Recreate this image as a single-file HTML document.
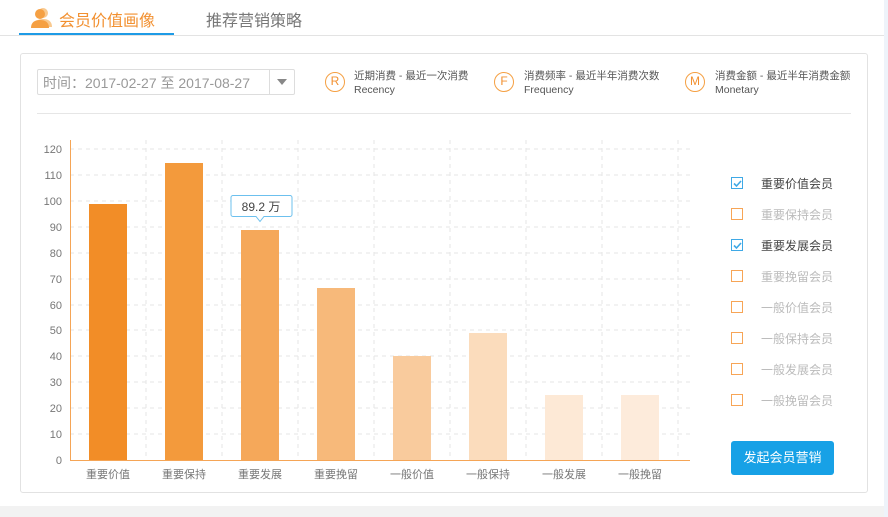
<!DOCTYPE html>
<html><head><meta charset="utf-8"><style>
*{margin:0;padding:0;box-sizing:border-box}
body{width:888px;height:517px;overflow:hidden;background:#fff;font-family:"Liberation Sans","Noto Sans CJK SC",sans-serif;position:relative}
.a{position:absolute;white-space:nowrap}
.cb{position:absolute;left:731px;width:12px;height:12px;border:1.5px solid #f7a556;background:#fff}
.cb.on{border-color:#3fa9e6}
.lt{position:absolute;left:761px;font-size:12px;color:#bbb}
.lt.on{color:#444}
.circ{position:absolute;width:20px;height:20px;border:1.5px solid #f5a043;border-radius:50%;color:#f29030;font-size:12px;text-align:center;line-height:17px}
.rt{position:absolute;font-size:10.5px;color:#555;line-height:14px}
</style></head><body>
<div class="a" style="left:884px;top:0;width:4px;height:517px;background:#eef3fa"></div>
<div class="a" style="left:0;top:506px;width:884px;height:11px;background:#f2f2f2"></div>
<svg class="a" style="left:30px;top:7px" width="24" height="22" viewBox="0 0 24 22"><circle cx="13" cy="6" r="5" fill="#f9c98f"/><path d="M4 20c0-6 4-8 9-8s9 2 9 8z" fill="#f9c98f"/><circle cx="10" cy="7" r="5" fill="#f5a043"/><path d="M1 21c0-6 4-8 9-8s9 2 9 8z" fill="#f5a043"/></svg>
<div class="a" style="left:59px;top:7px;font-size:16px;color:#f29030">会员价值画像</div>
<div class="a" style="left:206px;top:7px;font-size:16px;color:#777">推荐营销策略</div>
<div class="a" style="left:19px;top:33px;width:155px;height:2px;background:#1e9be6"></div>
<div class="a" style="left:0;top:35px;width:884px;height:1px;background:#e3e3e3"></div>
<div class="a" style="left:20px;top:53px;width:848px;height:440px;border:1px solid #e2e2e2;border-radius:3px"></div>
<div class="a" style="left:37px;top:69px;width:258px;height:26px;border:1px solid #ddd;border-radius:2px"></div>
<div class="a" style="left:269px;top:69px;width:1px;height:26px;background:#ddd"></div>
<div class="a" style="left:43px;top:73px;font-size:14px;color:#999">时间：2017-02-27 至 2017-08-27</div>
<div class="a" style="left:277px;top:79px;width:0;height:0;border-left:5px solid transparent;border-right:5px solid transparent;border-top:6px solid #888"></div>
<div class="circ" style="left:325px;top:72px">R</div>
<div class="rt" style="left:354px;top:69px">近期消费 - 最近一次消费<br>Recency</div>
<div class="circ" style="left:494px;top:72px">F</div>
<div class="rt" style="left:524px;top:69px">消费频率 - 最近半年消费次数<br>Frequency</div>
<div class="circ" style="left:685px;top:72px">M</div>
<div class="rt" style="left:715px;top:69px">消费金额 - 最近半年消费金额<br>Monetary</div>
<div class="a" style="left:37px;top:113px;width:814px;height:1px;background:#e6e6e6"></div>
<svg class="a" style="left:0;top:0" width="888" height="517">
<g stroke="#e6e6e6" stroke-dasharray="4,4" stroke-width="1">
<line x1="70" x2="690" y1="149" y2="149"/><line x1="70" x2="690" y1="175" y2="175"/><line x1="70" x2="690" y1="201" y2="201"/><line x1="70" x2="690" y1="227" y2="227"/><line x1="70" x2="690" y1="253" y2="253"/><line x1="70" x2="690" y1="279" y2="279"/><line x1="70" x2="690" y1="305" y2="305"/><line x1="70" x2="690" y1="330" y2="330"/><line x1="70" x2="690" y1="356" y2="356"/><line x1="70" x2="690" y1="382" y2="382"/><line x1="70" x2="690" y1="408" y2="408"/><line x1="70" x2="690" y1="434" y2="434"/>
<line x1="146" x2="146" y1="140" y2="460"/><line x1="222" x2="222" y1="140" y2="460"/><line x1="298" x2="298" y1="140" y2="460"/><line x1="374" x2="374" y1="140" y2="460"/><line x1="450" x2="450" y1="140" y2="460"/><line x1="526" x2="526" y1="140" y2="460"/><line x1="602" x2="602" y1="140" y2="460"/><line x1="678" x2="678" y1="140" y2="460"/>
</g>
<rect x="89" y="204" width="38" height="256" fill="#f28d27"/>
<rect x="165" y="163" width="38" height="297" fill="#f39a3c"/>
<rect x="241" y="230" width="38" height="230" fill="#f5a85a"/>
<rect x="317" y="288" width="38" height="172" fill="#f7b97a"/>
<rect x="393" y="356" width="38" height="104" fill="#f9cb9d"/>
<rect x="469" y="333" width="38" height="127" fill="#fbdcbc"/>
<rect x="545" y="395" width="38" height="65" fill="#fde9d6"/>
<rect x="621" y="395" width="38" height="65" fill="#fdebdb"/>
<line x1="70.5" x2="70.5" y1="140" y2="460" stroke="#f5a556"/>
<line x1="70" x2="690" y1="460.5" y2="460.5" stroke="#f5a556"/>
<path d="M233 195.5h57a2 2 0 0 1 2 2v17a2 2 0 0 1-2 2h-26l-4 5-4-5h-23a2 2 0 0 1-2-2v-17a2 2 0 0 1 2-2z" fill="#fff" stroke="#6cc0ee"/>
<text x="261" y="211" font-size="12" fill="#444" text-anchor="middle" font-family="Liberation Sans,Noto Sans CJK SC,sans-serif">89.2 万</text>
<g font-size="11" fill="#777" text-anchor="end" font-family="Liberation Sans,sans-serif">
<text x="62" y="153">120</text><text x="62" y="179">110</text><text x="62" y="205">100</text><text x="62" y="231">90</text><text x="62" y="257">80</text><text x="62" y="283">70</text><text x="62" y="309">60</text><text x="62" y="334">50</text><text x="62" y="360">40</text><text x="62" y="386">30</text><text x="62" y="412">20</text><text x="62" y="438">10</text><text x="62" y="464">0</text>
</g>
<g font-size="11" fill="#777" text-anchor="middle" font-family="Liberation Sans,Noto Sans CJK SC,sans-serif">
<text x="108" y="478">重要价值</text><text x="184" y="478">重要保持</text><text x="260" y="478">重要发展</text><text x="336" y="478">重要挽留</text><text x="412" y="478">一般价值</text><text x="488" y="478">一般保持</text><text x="564" y="478">一般发展</text><text x="640" y="478">一般挽留</text>
</g>
</svg>
<div class="cb on" style="top:177px"></div><svg class="a" style="left:733px;top:179px" width="9" height="9"><path d="M1 4.5l2.5 2.5 4.5-5" stroke="#3fa9e6" stroke-width="1.6" fill="none"/></svg>
<div class="lt on" style="top:175px">重要价值会员</div>
<div class="cb" style="top:208px"></div><div class="lt" style="top:206px">重要保持会员</div>
<div class="cb on" style="top:239px"></div><svg class="a" style="left:733px;top:241px" width="9" height="9"><path d="M1 4.5l2.5 2.5 4.5-5" stroke="#3fa9e6" stroke-width="1.6" fill="none"/></svg>
<div class="lt on" style="top:237px">重要发展会员</div>
<div class="cb" style="top:270px"></div><div class="lt" style="top:268px">重要挽留会员</div>
<div class="cb" style="top:301px"></div><div class="lt" style="top:299px">一般价值会员</div>
<div class="cb" style="top:332px"></div><div class="lt" style="top:330px">一般保持会员</div>
<div class="cb" style="top:363px"></div><div class="lt" style="top:361px">一般发展会员</div>
<div class="cb" style="top:394px"></div><div class="lt" style="top:392px">一般挽留会员</div>
<div class="a" style="left:731px;top:441px;width:103px;height:34px;background:#17a1e6;border-radius:3px;color:#fff;font-size:13px;text-align:center;line-height:34px">发起会员营销</div>
</body></html>
